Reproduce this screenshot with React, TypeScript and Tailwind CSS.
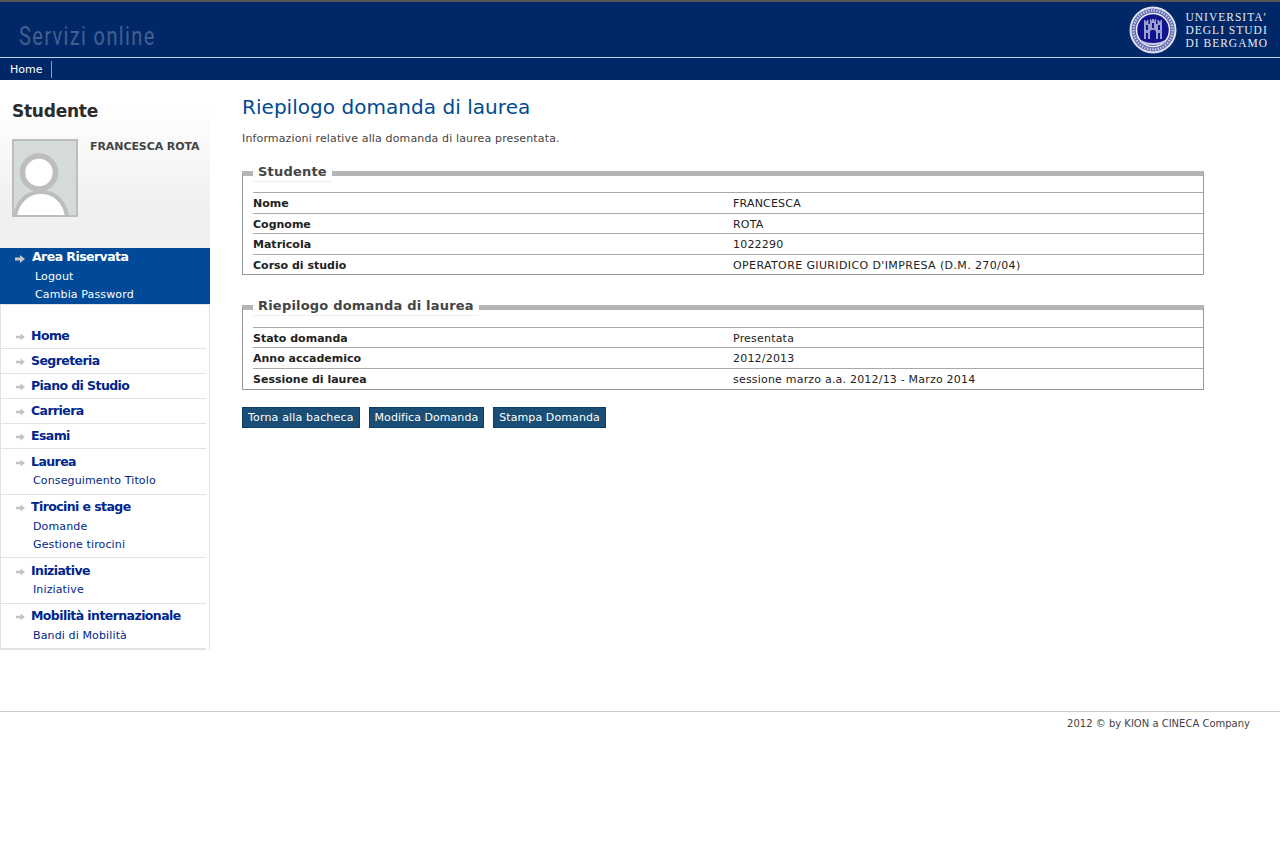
const student = [
  { label: "Nome", value: "FRANCESCA", h: "h-[21px]", track: "tracking-[0.2px]" },
  { label: "Cognome", value: "ROTA", h: "h-[20px]", track: "tracking-[0.2px]" },
  { label: "Matricola", value: "1022290", h: "h-[21px]", track: "tracking-[0.2px]" },
  { label: "Corso di studio", value: "OPERATORE GIURIDICO D'IMPRESA (D.M. 270/04)", h: "h-[20px]", track: "tracking-[0.38px]" },
];

const domanda = [
  { label: "Stato domanda", value: "Presentata", h: "h-[20px]", track: "tracking-[0.2px]" },
  { label: "Anno accademico", value: "2012/2013", h: "h-[21px]", track: "tracking-[0.2px]" },
  { label: "Sessione di laurea", value: "sessione marzo a.a. 2012/13 - Marzo 2014", h: "h-[21px]", track: "tracking-[0.2px]" },
];

const menu = [
  { title: "Home", links: [], pad: "", head: "" },
  { title: "Segreteria", links: [], pad: "", head: "" },
  { title: "Piano di Studio", links: [], pad: "", head: "" },
  { title: "Carriera", links: [], pad: "", head: "" },
  { title: "Esami", links: [], pad: "", head: "" },
  { title: "Laurea", links: ["Conseguimento Titolo"], pad: "pb-[4px]", head: "pt-[4px]" },
  { title: "Tirocini e stage", links: ["Domande", "Gestione tirocini"], pad: "pb-[3px]", head: "pt-[2px]" },
  { title: "Iniziative", links: ["Iniziative"], pad: "pb-[4px]", head: "pt-[4px]" },
  { title: "Mobilità internazionale", links: ["Bandi di Mobilità"], pad: "pb-[3px]", head: "pt-[2px]" },
];

const buttons = [
  { label: "Torna alla bacheca", track: "tracking-[0.17px]" },
  { label: "Modifica Domanda", track: "tracking-[0.05px]" },
  { label: "Stampa Domanda", track: "tracking-[0.1px]" },
];

function Arrow({ className }: { className: string }) {
  return (
    <svg viewBox="0 0 10 8" className={className} fill="currentColor">
      <path d="M0 2.500h5V0l5 4-5 4V5.500H0z" />
    </svg>
  );
}

function Seal() {
  return (
    <svg viewBox="0 0 48 48" className="h-[48px] w-[48px]">
      <circle cx="24" cy="24" r="23.500" fill="#dfe2f0" />
      <circle cx="24" cy="24" r="21.500" fill="#5c65ae" />
      <circle cx="24" cy="24" r="19.500" fill="none" stroke="#c3c7e2" strokeWidth="2.500" strokeDasharray="1.500 1.200" />
      <circle cx="24" cy="24" r="16.500" fill="#10148c" stroke="#eceef7" strokeWidth="1.500" />
      {/* towers */}
      <path d="M15 14h1.500v1.500H18V14h1.500v4H21v-5h1v1.500h1V13h2v1.500h1V13h1v5h1.500v-4H30v1.500h1.500V14H33v19H15z" fill="#9a9fd0" />
      <path d="M17 19h2v5h-2zM23 17h2v5h-2zM29 19h2v5h-2zM17 27h2v6h-2zM29 27h2v6h-2zM21 26c0-3 6-3 6 0v7h-6z" fill="#10148c" />
      <path d="M12 34c6 4 18 4 24 0l-1 3c-6 3-16 3-22 0z" fill="#c4c7e3" />
    </svg>
  );
}

function Avatar() {
  return (
    <div className="h-[78px] w-[66px] shrink-0 overflow-hidden border-2 border-[#bdbdbd] bg-[#d5dadb]">
      <svg viewBox="0 0 62 74" className="h-full w-full">
        <path d="M1 76C3 60 14 51 27 51S51 60 53 76z" fill="#fff" stroke="#bdbdbd" strokeWidth="4" />
        <circle cx="25" cy="31.500" r="16.500" fill="#fff" stroke="#bdbdbd" strokeWidth="5.500" />
      </svg>
    </div>
  );
}

function Section({
  title,
  rows,
  gap,
}: {
  title: string;
  rows: { label: string; value: string; h: string; track: string }[];
  gap: string;
}) {
  return (
    <fieldset className="border border-t-[5px] border-[#999999] border-t-[#b5b5b5] pl-[10px]">
      <legend className="ml-0 border-b border-[#eeeeee] bg-white px-[5px] pb-[2px] text-[13px] leading-[15px] font-bold tracking-[0.2px] text-[#444444]">
        {title}
      </legend>
      <div className={gap}>
        {rows.map((r) => (
          <div
            key={r.label}
            className={`flex items-center border-t border-[#aaaaaa] pt-[3px] text-[11px] text-[#222222] ${r.h}`}
          >
            <span className="w-[480px] font-bold">{r.label}</span>
            <span className={r.track}>{r.value}</span>
          </div>
        ))}
      </div>
    </fieldset>
  );
}

export default function App() {
  return (
    <div className="flex min-h-[844px] flex-col bg-white font-['DejaVu_Sans','Liberation_Sans',sans-serif]">
      {/* Header */}
      <header className="flex h-[58px] items-center justify-between border-t-2 border-b border-t-[#555555] border-b-[#c5cde0] bg-[#002868] pr-[12px] pl-[19px]">
        <span className="mt-[14px] origin-left scale-x-[0.8] font-['Roboto',sans-serif] text-[25px] leading-none tracking-[1.700px] text-[#42608f]">
          Servizi online
        </span>
        <div className="flex items-center gap-[8px]">
          <Seal />
          <div className="mt-[2px] font-['Liberation_Serif',serif] text-[11.500px] leading-[13px] tracking-[1px] text-[#e6eaf2]">
            <div>UNIVERSITA'</div>
            <div>DEGLI STUDI</div>
            <div>DI BERGAMO</div>
          </div>
        </div>
      </header>

      {/* Top nav */}
      <nav className="flex h-[22px] items-center bg-[#002868] pl-[10px]">
        <span className="flex h-[17px] items-center border-r border-[#8b9abb] pt-[2px] pr-[9px] text-[11px] text-white">
          Home
        </span>
      </nav>

      <div className="flex h-[631px]">
        {/* Sidebar */}
        <aside className="w-[210px] shrink-0">
          <div className="h-[168px] bg-gradient-to-b from-white from-[15%] to-[#f0f0f0] to-[75%] pt-[21px] pl-[12px]">
            <h2 className="text-[17px] leading-[20px] font-bold tracking-[-0.25px] text-[#2b2b2b]">Studente</h2>
            <div className="mt-[18px] flex gap-[12px]">
              <Avatar />
              <span className="mt-[1px] text-[11px] leading-[13px] font-bold tracking-[-0.08px] whitespace-nowrap text-[#444444]">
                FRANCESCA ROTA
              </span>
            </div>
          </div>

          <div className="h-[56px] bg-[#004a99] text-white">
            <div className="flex h-[18px] items-center pl-[15px] text-[12.500px] font-bold tracking-[-0.55px]">
              <Arrow className="mt-[3px] mr-[7px] h-[8px] w-[10px] text-[#c4c4c4]" />
              Area Riservata
            </div>
            <div className="mt-[2px] pl-[35px] text-[11px] leading-[18px] tracking-[0.13px]">
              <div>Logout</div>
              <div>Cambia Password</div>
            </div>
          </div>

          <div className="border-x border-t border-[#e2e2e2] pt-[19px] pr-[3px]">
            {menu.map((m, i) => (
              <div
                key={m.title}
                className={`border-[#e2e2e2] ${i === menu.length - 1 ? "border-b-2" : "border-b"} ${m.pad}`}
              >
                <div
                  className={`flex items-center pl-[15px] text-[12.500px] font-bold tracking-[-0.58px] text-[#00268c] ${m.head} ${m.links.length > 0 ? "h-[23px]" : "h-[24px]"}`}
                >
                  <Arrow className="mt-[1px] mr-[6px] h-[8px] w-[9px] text-[#c4c4c4]" />
                  {m.title}
                </div>
                {m.links.map((l) => (
                  <div key={l} className="pl-[32px] text-[11px] leading-[18px] tracking-[0.13px] text-[#00268c]">
                    {l}
                  </div>
                ))}
              </div>
            ))}
          </div>
        </aside>

        {/* Main content */}
        <main className="ml-[32px] w-[962px]">
          <h1 className="mt-[15px] text-[20px] leading-[24px] tracking-[0.04px] text-[#004a8f]">
            Riepilogo domanda di laurea
          </h1>
          <p className="mt-[13px] text-[11px] leading-[14px] tracking-[0.14px] text-[#444444]">
            Informazioni relative alla domanda di laurea presentata.
          </p>
          <div className="mt-[18px]">
            <Section title="Studente" rows={student} gap="mt-[10px]" />
          </div>
          <div className="mt-[23px]">
            <Section title="Riepilogo domanda di laurea" rows={domanda} gap="mt-[11px]" />
          </div>
          <div className="mt-[17px] flex gap-[9px]">
            {buttons.map((b) => (
              <button
                key={b.label}
                className={`h-[21px] border border-[#0c3f66] bg-[#1a4e75] px-[5px] pt-[2px] text-[11px] text-white ${b.track}`}
              >
                {b.label}
              </button>
            ))}
          </div>
        </main>
      </div>

      {/* Footer */}
      <footer className="border-t border-[#cccccc] pt-[5px] pr-[30px] text-right text-[10px] leading-[14px] text-[#444444]">
        2012 © by KION a CINECA Company
      </footer>
    </div>
  );
}
